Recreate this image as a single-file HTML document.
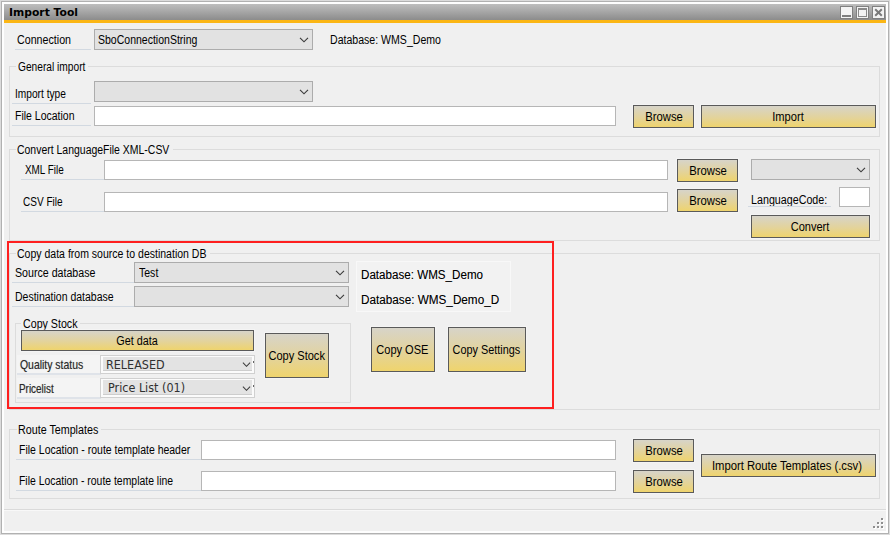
<!DOCTYPE html>
<html>
<head>
<meta charset="utf-8">
<title>Import Tool</title>
<style>
html,body{margin:0;padding:0;}
body{width:890px;height:535px;overflow:hidden;background:#dcdcdc;position:relative;
 font-family:"Liberation Sans",sans-serif;font-size:12px;color:#000;}
*{box-sizing:border-box;}
.win, .win *{position:absolute;}
.win{left:0;top:0;width:890px;height:535px;}
.frame{left:1px;top:1px;width:888px;height:533px;border:1px solid #b1b1b1;background:#fefefe;}
.content{left:4px;top:4px;width:882px;height:527px;background:#f0f0f0;}
.title{left:4px;top:4px;width:882px;height:16px;background:linear-gradient(#bebebe,#a8a8a8 45%,#8c8c8c);}
.stripe{left:4px;top:20px;width:882px;height:3px;background:#fbb615;}
.wb{top:6px;width:13px;height:13px;background:#f3f3f3;border:1px solid #808080;}
.tx{white-space:nowrap;line-height:14px;font-size:12px;transform-origin:0 0;}
.ul{height:1px;background:#d2d9e1;}
.gb{border:1px solid #dcdcdc;}
.gap{background:#f0f0f0;}
.combo{background:#e2e2e2;border:1px solid #acacac;}
.combo svg{right:3px;top:7px;width:10px;height:6px;}
.inp{background:#fff;border:1px solid #b6b6b6;}
.btn{border:1px solid #5a5a5a;background:linear-gradient(#d7d4c9,#e3d39b 55%,#efd46d);box-shadow:0 0 0 1px rgba(255,255,255,.3);
 text-align:center;white-space:nowrap;font-size:12px;}
.btn span{position:relative;display:inline-block;transform-origin:50% 50%;}
.red{border:2px solid #fe1f1f;}
.ul2{height:2px;background:#dfe3e9;}
.qc{background:#fbfbfb;border:1px solid #d0d0d0;}
.qc div{left:2px;top:1px;right:2px;bottom:2px;background:#e3e3e3;border-bottom:1px solid #cdcdcd;}
.qc svg{right:3.5px;top:6px;width:9px;height:5.4px;}
</style>
</head>
<body>
<div class="win">
<div class="frame"></div>
<div class="content"></div>
<div class="title"></div>
<div class="tx" style="left:9.02px;top:6px;transform:scaleX(0.9797);font-weight:bold;font-family:'DejaVu Sans',sans-serif;font-size:11px;">Import Tool</div>
<div class="stripe"></div>
<div class="wb" style="left:840px"><div style="left:1px;top:8px;width:9px;height:2px;background:#7d7d7d"></div></div>
<div class="wb" style="left:856px"><div style="left:1px;top:1px;width:9px;height:9px;border:1px solid #8a8a8a;border-top-width:2px"></div></div>
<div class="wb" style="left:872px"><svg style="left:1px;top:1px;width:9px;height:9px" viewBox="0 0 9 9"><path d="M1.2 1.2 L7.8 7.8 M7.8 1.2 L1.2 7.8" stroke="#7a7a7a" stroke-width="2" fill="none"/></svg></div>

<div class="tx" style="left:17.21px;top:33px;transform:scaleX(0.8898);">Connection</div>
<div class="ul" style="left:15px;top:49px;width:76px"></div>
<div class="combo" style="left:94px;top:29px;width:219px;height:21px"><svg viewBox="0 0 10 6"><path d="M1 0.8 L5 4.8 L9 0.8" stroke="#3c3c3c" stroke-width="1.15" fill="none"/></svg></div>
<div class="tx" style="left:97.82px;top:33px;transform:scaleX(0.8759);">SboConnectionString</div>
<div class="tx" style="left:330.02px;top:33px;transform:scaleX(0.8800);">Database: WMS_Demo</div>
<div class="gb" style="left:9px;top:66px;width:871px;height:71px"></div><div class="gap" style="left:16px;top:66px;width:72px;height:1px"></div>
<div class="tx" style="left:17.55px;top:60px;transform:scaleX(0.8487);">General import</div>
<div class="tx" style="left:14.75px;top:87px;transform:scaleX(0.8475);">Import type</div>
<div class="ul" style="left:12px;top:103px;width:79px"></div>
<div class="combo" style="left:94px;top:81px;width:219px;height:21px"><svg viewBox="0 0 10 6"><path d="M1 0.8 L5 4.8 L9 0.8" stroke="#3c3c3c" stroke-width="1.15" fill="none"/></svg></div>
<div class="tx" style="left:14.73px;top:109px;transform:scaleX(0.8742);">File Location</div>
<div class="ul" style="left:12px;top:125px;width:79px"></div>
<div class="inp" style="left:94px;top:106px;width:522px;height:20px"></div>
<div class="btn" style="left:633px;top:105px;width:61px;height:23px;line-height:21px"><span style="transform:scaleX(0.94);top:1px;left:1px">Browse</span></div>
<div class="btn" style="left:701px;top:105px;width:175px;height:23px;line-height:21px"><span style="transform:scaleX(0.925);top:1px;left:0px">Import</span></div>
<div class="gb" style="left:9px;top:149px;width:871px;height:92px"></div><div class="gap" style="left:16px;top:149px;width:157px;height:1px"></div>
<div class="tx" style="left:17.13px;top:143px;transform:scaleX(0.8718);">Convert LanguageFile XML-CSV</div>
<div class="tx" style="left:24.70px;top:163px;transform:scaleX(0.8255);">XML File</div>
<div class="ul" style="left:21px;top:179px;width:83px"></div>
<div class="inp" style="left:104px;top:160px;width:564px;height:20px"></div>
<div class="btn" style="left:677px;top:159px;width:61px;height:23px;line-height:21px"><span style="transform:scaleX(0.94);top:1px;left:1px">Browse</span></div>
<div class="combo" style="left:751px;top:159px;width:119px;height:21px"><svg viewBox="0 0 10 6"><path d="M1 0.8 L5 4.8 L9 0.8" stroke="#3c3c3c" stroke-width="1.15" fill="none"/></svg></div>
<div class="tx" style="left:23.46px;top:195px;transform:scaleX(0.8370);">CSV File</div>
<div class="ul" style="left:21px;top:211px;width:83px"></div>
<div class="inp" style="left:104px;top:192px;width:564px;height:20px"></div>
<div class="btn" style="left:677px;top:189px;width:61px;height:23px;line-height:21px"><span style="transform:scaleX(0.94);top:1px;left:1px">Browse</span></div>
<div class="tx" style="left:751.11px;top:193px;transform:scaleX(0.8928);">LanguageCode:</div>
<div class="ul" style="left:748px;top:206px;width:83px"></div>
<div class="inp" style="left:839px;top:187px;width:31px;height:20px"></div>
<div class="btn" style="left:751px;top:215px;width:119px;height:23px;line-height:21px"><span style="transform:scaleX(0.92);top:1px;left:0px">Convert</span></div>
<div class="gb" style="left:9px;top:253px;width:871px;height:157px"></div><div class="gap" style="left:16px;top:253px;width:194px;height:1px"></div>
<div class="tx" style="left:17.42px;top:247px;transform:scaleX(0.8767);">Copy data from source to destination DB</div>
<div class="tx" style="left:14.91px;top:266px;transform:scaleX(0.8865);">Source database</div>
<div class="ul" style="left:12px;top:282px;width:122px"></div>
<div class="combo" style="left:134px;top:262px;width:215px;height:21px"><svg viewBox="0 0 10 6"><path d="M1 0.8 L5 4.8 L9 0.8" stroke="#3c3c3c" stroke-width="1.15" fill="none"/></svg></div>
<div class="tx" style="left:139.00px;top:266px;transform:scaleX(0.8770);">Test</div>
<div class="tx" style="left:15.33px;top:290px;transform:scaleX(0.8748);">Destination database</div>
<div class="ul" style="left:12px;top:306px;width:122px"></div>
<div class="combo" style="left:134px;top:286px;width:215px;height:21px"><svg viewBox="0 0 10 6"><path d="M1 0.8 L5 4.8 L9 0.8" stroke="#3c3c3c" stroke-width="1.15" fill="none"/></svg></div>
<div id="dbpatch" style="left:356px;top:261px;width:155px;height:51px;background:#f2f2f2;border:1px solid #f8f8f8"></div>
<div class="tx" style="left:361.33px;top:268px;transform:scaleX(0.9680);text-shadow:0 0 .6px rgba(0,0,0,.3);">Database: WMS_Demo</div>
<div class="tx" style="left:361.32px;top:293px;transform:scaleX(0.9771);text-shadow:0 0 .6px rgba(0,0,0,.3);">Database: WMS_Demo_D</div>
<div class="gb" style="left:15px;top:323px;width:336px;height:80px"></div><div class="gap" style="left:21px;top:323px;width:59px;height:1px"></div>
<div class="tx" style="left:23.11px;top:317px;transform:scaleX(0.8883);">Copy Stock</div>
<div class="btn" style="left:21px;top:330px;width:233px;height:21px;line-height:19px"><span style="transform:scaleX(0.9);top:1px;left:0px">Get data</span></div>
<div style="left:17px;top:355px;width:84px;height:19px;background:#f4f4f4"></div>
<div style="left:17px;top:378px;width:84px;height:20px;background:#f4f4f4"></div>
<div class="tx" style="left:19.50px;top:358px;transform:scaleX(0.8026);font-size:13px;text-shadow:0 0 .8px rgba(0,0,0,.35);color:#2a2a2a;">Quality status</div>
<div class="ul2" style="left:17px;top:373px;width:84px"></div>
<div class="tx" style="left:19.24px;top:382px;transform:scaleX(0.7622);font-size:13px;text-shadow:0 0 .8px rgba(0,0,0,.35);color:#2a2a2a;">Pricelist</div>
<div class="ul2" style="left:17px;top:397px;width:84px"></div>
<div class="qc" style="left:100px;top:355px;width:155px;height:19px"><div></div><svg viewBox="0 0 10 6"><path d="M1 0.8 L5 4.8 L9 0.8" stroke="#3c3c3c" stroke-width="1.15" fill="none"/></svg></div>
<div class="qc" style="left:100px;top:378px;width:155px;height:20px"><div></div><svg style="top:6.5px" viewBox="0 0 10 6"><path d="M1 0.8 L5 4.8 L9 0.8" stroke="#3c3c3c" stroke-width="1.15" fill="none"/></svg></div>
<div class="tx" style="left:105.50px;top:358px;transform:scaleX(0.9048);font-family:'DejaVu Sans',sans-serif;font-size:12.4px;color:#303030;">RELEASED</div>
<div class="tx" style="left:107.61px;top:381px;transform:scaleX(0.8894);font-family:'DejaVu Sans',sans-serif;font-size:12.6px;color:#303030;">Price List (01)</div>
<div style="left:253px;top:361px;width:1px;height:2px;background:#666"></div><div style="left:253px;top:385px;width:1px;height:2px;background:#666"></div>
<div class="btn" style="left:265px;top:333px;width:64px;height:45px;line-height:43px"><span style="transform:scaleX(0.92);top:1px;left:0px">Copy Stock</span></div>
<div class="btn" style="left:371px;top:327px;width:64px;height:45px;line-height:43px"><span style="transform:scaleX(0.92);top:1px;left:-1px">Copy OSE</span></div>
<div class="btn" style="left:448px;top:327px;width:78px;height:45px;line-height:43px"><span style="transform:scaleX(0.905);top:1px;left:-1px">Copy Settings</span></div>
<div class="red" style="left:7px;top:241px;width:547px;height:168px"></div>
<div class="gb" style="left:9px;top:429px;width:871px;height:70px"></div><div class="gap" style="left:17px;top:429px;width:84px;height:1px"></div>
<div class="tx" style="left:18.31px;top:423px;transform:scaleX(0.8932);">Route Templates</div>
<div class="tx" style="left:19.13px;top:443px;transform:scaleX(0.8733);">File Location - route template header</div>
<div class="ul" style="left:16px;top:459px;width:185px"></div>
<div class="inp" style="left:201px;top:440px;width:415px;height:20px"></div>
<div class="btn" style="left:633px;top:439px;width:61px;height:23px;line-height:21px"><span style="transform:scaleX(0.94);top:1px;left:1px">Browse</span></div>
<div class="tx" style="left:19.13px;top:474px;transform:scaleX(0.8682);">File Location - route template line</div>
<div class="ul" style="left:16px;top:490px;width:185px"></div>
<div class="inp" style="left:201px;top:471px;width:415px;height:20px"></div>
<div class="btn" style="left:633px;top:470px;width:61px;height:23px;line-height:21px"><span style="transform:scaleX(0.94);top:1px;left:1px">Browse</span></div>
<div class="btn" style="left:701px;top:454px;width:175px;height:23px;line-height:21px"><span style="transform:scaleX(0.939);top:1px;left:-1.5px">Import Route Templates (.csv)</span></div>
<div style="left:4px;top:509px;width:882px;height:1px;background:#dadada"></div>
<div style="left:4px;top:510px;width:882px;height:1px;background:#f8f8f8"></div>
<svg style="left:873px;top:518px;width:12px;height:12px" viewBox="0 0 12 12"><rect x="9" y="1" width="2" height="2" fill="#fff"/><rect x="5" y="5" width="2" height="2" fill="#fff"/><rect x="9" y="5" width="2" height="2" fill="#fff"/><rect x="1" y="9" width="2" height="2" fill="#fff"/><rect x="5" y="9" width="2" height="2" fill="#fff"/><rect x="9" y="9" width="2" height="2" fill="#fff"/><rect x="8" y="0" width="2" height="2" fill="#8e8e8e"/><rect x="4" y="4" width="2" height="2" fill="#8e8e8e"/><rect x="8" y="4" width="2" height="2" fill="#8e8e8e"/><rect x="0" y="8" width="2" height="2" fill="#8e8e8e"/><rect x="4" y="8" width="2" height="2" fill="#8e8e8e"/><rect x="8" y="8" width="2" height="2" fill="#8e8e8e"/></svg>
</div>
</body>
</html>
